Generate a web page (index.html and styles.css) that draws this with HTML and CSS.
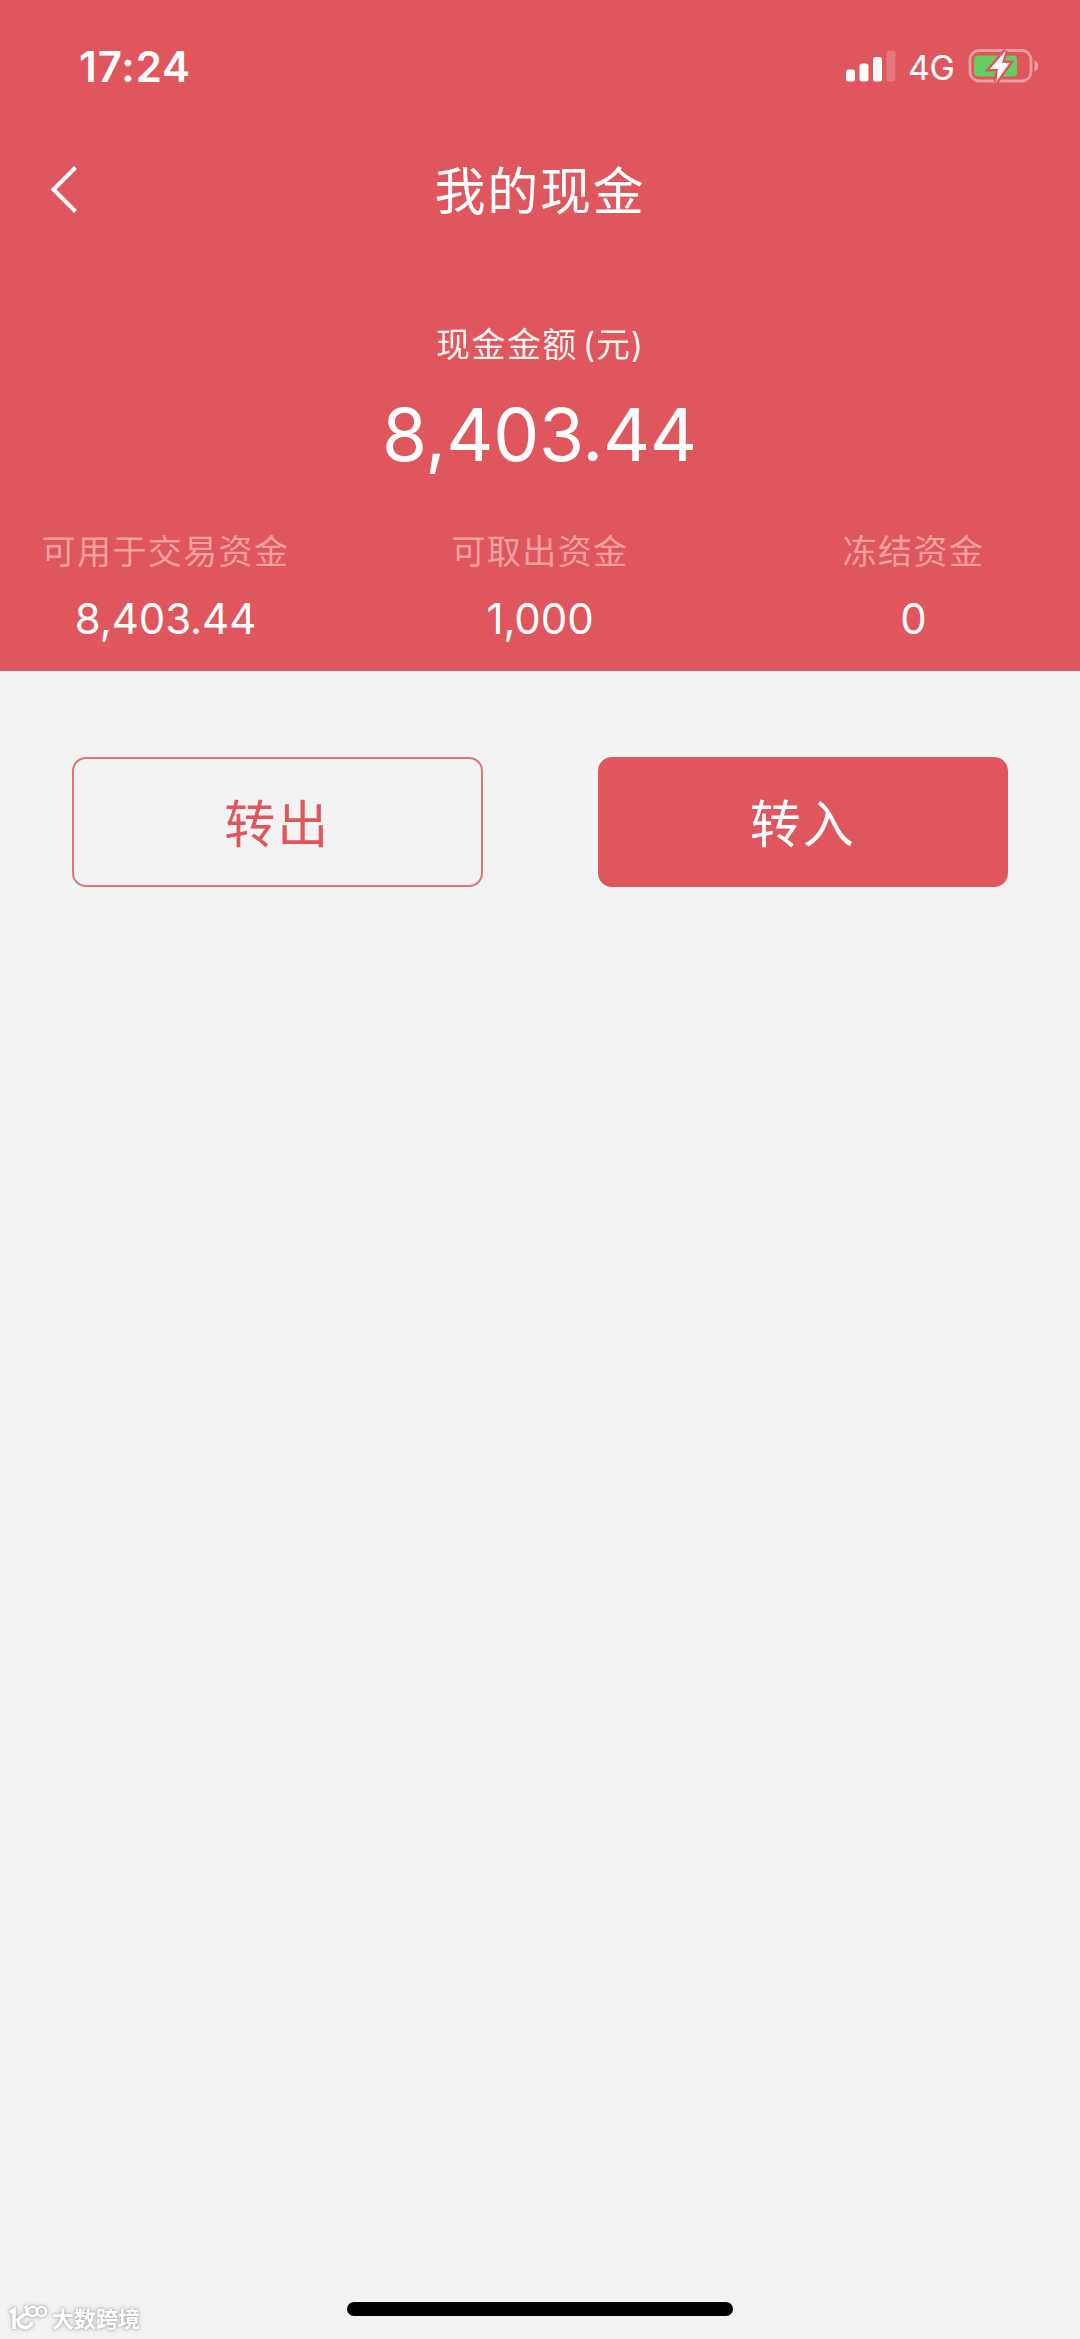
FILE: index.html
```html
<!DOCTYPE html>
<html lang="zh-CN">
<head>
<meta charset="utf-8">
<title>我的现金</title>
<link rel="stylesheet" href="styles.css">
</head>
<body>
<div class="screen">
  <header class="hero">
    <div class="status">
      <span class="time">17:24</span>
      <div class="indicators">
        <svg class="signal" width="50" height="32" viewBox="0 0 50 32" fill="#fff">
          <rect x="0" y="19.5" width="9" height="12" rx="2.5"/>
          <rect x="13.500" y="13.500" width="9" height="18" rx="2.5"/>
          <rect x="27" y="7" width="9" height="24.500" rx="2.5"/>
          <rect x="40.500" y="0.500" width="9" height="31" rx="2.5" opacity=".2"/>
        </svg>
        <span class="network">4G</span>
        <svg class="battery" width="72" height="36" viewBox="0 0 72 36">
          <rect x="2" y="2.500" width="61" height="30.500" rx="9" fill="none" stroke="#fff" stroke-opacity=".42" stroke-width="2.800"/>
          <path d="M66.500 12.500c5 1.500 5 9.500 0 11z" fill="#fff" fill-opacity=".42"/>
          <rect x="6" y="7.500" width="43" height="21" rx="4" fill="#64ce63"/>
          <path d="M37.700 2.700 22 21H30L28.300 33.700 41.500 15H34z" fill="#fff" stroke="#df565d" stroke-width="5" paint-order="stroke"/>
        </svg>
      </div>
    </div>
    <nav class="titlebar">
      <svg class="back" width="28" height="48" viewBox="0 0 28 48" fill="none" stroke="#fff" stroke-width="4">
        <path d="M25.500 1.500 3.500 23.500 25.500 45.500"/>
      </svg>
      <h1 class="title">我的现金</h1>
    </nav>
    <section class="total">
      <div class="total-label">现金金额<span class="unit">(元)</span></div>
      <div class="total-value">8,403.44</div>
    </section>
    <section class="stats">
      <div class="stat"><span class="stat-label">可用于交易资金</span><span class="stat-value">8,403.44</span></div>
      <div class="stat"><span class="stat-label">可取出资金</span><span class="stat-value">1,000</span></div>
      <div class="stat"><span class="stat-label">冻结资金</span><span class="stat-value">0</span></div>
    </section>
  </header>
  <main class="actions">
    <button class="btn btn-outline">转出</button>
    <button class="btn btn-solid">转入</button>
  </main>
  <footer class="bottom">
    <div class="brand">
      <svg class="brand-logo" width="40" height="29" viewBox="0 0 40 29" fill="none" stroke="#fff" stroke-width="3.600">
        <path d="M1 8.500 5 6V25M16 9.500 7.500 17M9 16c1 9.500 12 10 14 2"/>
        <g stroke-width="2.400"><path d="M15 4 17.500 2.500V12"/><circle cx="23.500" cy="7.500" r="4.600"/><circle cx="32.500" cy="7.500" r="4.600"/></g>
      </svg>
      <span class="brand-name">大数跨境</span>
    </div>
    <div class="home-indicator"></div>
  </footer>
</div>
</body>
</html>
```
FILE: styles.css
```css
* { box-sizing: border-box; }
body {
  margin: 0;
  background: #f3f3f3;
  font-family: Inter, "Noto Sans CJK SC", sans-serif;
}
.screen {
  display: flex;
  flex-direction: column;
  width: 1080px;
  height: 2339px;
}
.hero {
  height: 671px;
  background: #df565d;
  color: #fff;
}
.status {
  display: flex;
  justify-content: space-between;
  align-items: center;
  height: 132px;
  padding: 0 40px 0 79px;
}
.time {
  font-size: 42px;
  font-weight: 600;
  letter-spacing: 0.9px;
}
.indicators {
  display: flex;
  align-items: center;
}
.network {
  width: 46px;
  margin: 3px 14px 0 12px;
  font-size: 34px;
  line-height: 36px;
  letter-spacing: -0.5px;
}
.titlebar {
  display: grid;
  grid-template-columns: 150px 1fr 150px;
  align-items: center;
  height: 116px;
}
.back { margin-left: 50px; }
.title {
  margin: 3px 0 0;
  font-size: 51px;
  font-weight: 400;
  line-height: 74px;
  letter-spacing: 1.8px;
  text-align: center;
}
.total {
  padding-top: 71px;
  text-align: center;
}
.total-label {
  height: 52px;
  font-size: 34px;
  line-height: 52px;
  letter-spacing: 1.4px;
  opacity: .93;
}
.unit {
  margin-left: 5px;
  letter-spacing: 0.8px;
}
.total-value {
  height: 110px;
  margin-top: 9px;
  padding-right: 1px;
  font-size: 73px;
  line-height: 110px;
  letter-spacing: -0.2px;
}
.stats {
  display: grid;
  grid-template-columns: 331px 418px 329px;
  padding-top: 36px;
}
.stat {
  display: flex;
  flex-direction: column;
  align-items: center;
}
.stat-label {
  font-size: 34px;
  line-height: 52px;
  letter-spacing: 1.4px;
  color: #f4a09f;
}
.stat-value {
  margin-top: 9px;
  font-size: 42px;
  line-height: 64px;
  letter-spacing: -0.1px;
}
.actions {
  display: flex;
  justify-content: space-between;
  padding: 86px 72px 0;
}
.btn {
  width: 410.5px;
  height: 130px;
  padding: 0 0 2px;
  border: 2px solid #df565d;
  border-radius: 14px;
  font: 400 51px/72px "Noto Sans CJK SC", sans-serif;
  letter-spacing: 2px;
}
.btn-outline { background: transparent; color: #df565d; border-color: #e0747a; }
.btn-solid { background: #df565d; color: #fff; }
.bottom {
  display: grid;
  grid-template-columns: 347px 386px 347px;
  align-items: start;
  height: 38px;
  margin-top: auto;
}
.brand {
  display: flex;
  align-items: center;
  height: 32px;
  padding-left: 9px;
  color: #fff;
  filter: drop-shadow(0 0 1px #a5a5a5) drop-shadow(0 0 2px #c4c4c4);
}
.brand-logo { flex: none; margin-top: 3px; }
.brand-name {
  margin: 4px 0 0 3px;
  font-size: 22px;
  font-weight: 700;
  line-height: 30px;
}
.home-indicator {
  height: 14px;
  margin-top: 1px;
  border-radius: 7px;
  background: #000;
}
```
